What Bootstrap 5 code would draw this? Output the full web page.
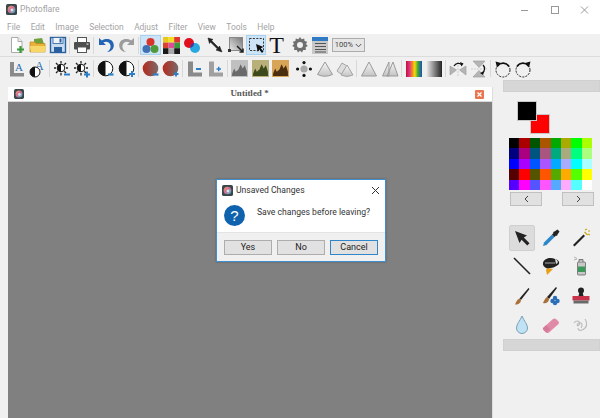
<!DOCTYPE html>
<html lang="en">
<head>
  <meta charset="UTF-8" />
  <title>Photoflare</title>
  <link href="https://cdn.jsdelivr.net/npm/bootstrap@5.3.0/dist/css/bootstrap.min.css" rel="stylesheet">
  <style>
    html, body { height: 100%; }
    body {
      background: #f0f0f0;
      font-family: Roboto, "Open Sans", sans-serif;
      font-size: 9px;
      overflow: hidden;
    }
    .app { width: 600px; height: 418px; position: relative; }
    .title-row { height: 20px; background: #fff; color: #a3a3a3; font-size: 8.6px; padding: 0 0 1px 6px; }
    .title-row .app-name { margin-left: 3px; }
    .win-btns svg { display: block; }
    .menu-row { height: 14px; background: #fff; color: #a3a3a3; padding-left: 7px; gap: 10.5px; font-size: 8.4px; }
    .tool-row { height: 23px; background: #f0f0f0; padding-left: 6.75px; border-bottom: 1px solid #dcdcdc; }
    .tool-row + .tool-row { border-bottom: 0; }
    .tb-btn { width: 20.5px; height: 20px; display: flex; align-items: center; justify-content: center; border: 1px solid transparent; flex: none; }
    .tb-btn.on { background: #cde4f7; border-color: #a8d2f0; }
    .tb-sep { width: 3.5px; height: 17px; flex: none; }
    .tb-sep::after { content: ""; display: block; width: 1px; height: 17px; margin-left: 1px; background: #d8d8d8; }
    .tb-nosep { width: 3px; }
    .tb-nosep::after { display: none; }
    .t-glyph { font-family: "Liberation Serif", serif; font-size: 24px; line-height: 20px; color: #111; }
    .combo { width: 33px; height: 14px; border: 1px solid #acacac; background: #e6e6e6; font-size: 7.5px; color: #444; padding: 0 2px; margin-left: 1px; }
    .work { height: 338px; }
    .canvas-side { width: 503px; padding: 7px 0 0 8px; }
    .sub-win { width: 485px; height: 331px; background: #808080; border-right: 1px solid #ddd; }
    .sub-title { height: 15px; background: #fff; border-bottom: 1px solid #d8d8d8; padding: 0 6px; font-family: "Liberation Serif", serif; font-size: 9px; font-weight: 700; color: #555; }
    .sub-title .name { flex: 1; text-align: center; }
    .close-x { width: 9px; height: 9px; background: #e8774f; border-radius: 1px; margin-right: 2px; color: #fff; }
    .side { width: 97px; }
    .grey-bar { height: 12px; background: #d6d6d6; border: 1px solid #d0d0d0; }
    .swatches { height: 46px; padding: 9px 0 0 14px; }
    .swatch { width: 20px; height: 20px; border: 1px solid #c8c8c8; }
    .swatch-fg { background: #000; position: relative; z-index: 1; }
    .swatch-bg { background: #f00; margin: -7px 0 0 13px; }
    .palette { display: grid; grid-template-columns: repeat(8, 10.4px); grid-auto-rows: 10.4px; margin-left: 6px; width: 84px; }
    .nav-btns { padding: 2px 6px 0 7px; }
    .pal-btn { width: 32px; height: 14px; background: #e1e1e1; border: 1px solid #c0c0c0; display: flex; align-items: center; justify-content: center; }
    .tools-grid { display: grid; grid-template-columns: 26px 31px 30px; grid-template-rows: 26px 30px 30px 28px; margin: 19px 0 0 6px; justify-items: center; align-items: center; }
    .tool-on { width: 26px; height: 26px; background: #dcdcdc; border: 1px solid #cfcfcf; border-radius: 2px; }
    .dlg { position: absolute; left: 216px; top: 179px; width: 170px; height: 83px; background: #fff; border: 1px solid #3f8fcf; box-shadow: 0 0 2px rgba(0,0,0,.3); color: #333; }
    .dlg-head { height: 20px; padding: 0 5px; font-size: 8.6px; }
    .dlg-head span { margin-left: 3px; flex: 1; }
    .dlg-body { height: 32px; padding: 0 0 2px 7px; }
    .dlg-body span { margin: -6px 0 0 12px; font-size: 8.6px; }
    .dlg-foot { height: 29px; background: #f0f0f0; padding: 0 7px; gap: 5px; border-top: 1px solid #e4e4e4; }
    .dlg-btn { width: 48px; height: 15px; background: #e1e1e1; border: 1px solid #adadad; font-size: 9px; line-height: 13px; text-align: center; color: #222; }
    .dlg-btn.def { border: 1.5px solid #2f86c8; line-height: 12px; }
    .svg-defs { width: 0; height: 0; display: block; }
    .scene-a { color: #6a6a6a; }
    .scene-b { color: #3d4a1e; }
    .scene-c { color: #4a2e10; }
  </style>
</head>
<body>

<svg class="svg-defs">
  <defs>
    <linearGradient id="gTri" x1="0" y1="0" x2="0" y2="1"><stop offset="0" stop-color="#f6f6f6"/><stop offset="1" stop-color="#c4c4c4"/></linearGradient>
    <linearGradient id="gRed" x1="0" y1="0" x2="1" y2="0"><stop offset="0" stop-color="#b52a1c"/><stop offset="1" stop-color="#7a6a6a"/></linearGradient>
    <linearGradient id="gGray" x1="0" y1="0" x2="1" y2="0"><stop offset="0" stop-color="#f2f2f2"/><stop offset="1" stop-color="#222"/></linearGradient>
    <linearGradient id="gCrop" x1="0" y1="1" x2="1" y2="0"><stop offset="0" stop-color="#e8e8e8"/><stop offset="1" stop-color="#777"/></linearGradient>
    <linearGradient id="gRain" x1="0" y1="0" x2="1" y2="0">
      <stop offset="0" stop-color="#c8102e"/><stop offset=".2" stop-color="#d92f8c"/><stop offset=".4" stop-color="#f28c1e"/><stop offset=".55" stop-color="#f5d90a"/><stop offset=".75" stop-color="#3aa63a"/><stop offset="1" stop-color="#1e4fb8"/>
    </linearGradient>
    <linearGradient id="gLogo" x1="0" y1="0" x2="1" y2="1"><stop offset="0" stop-color="#e8a860"/><stop offset=".45" stop-color="#d86a98"/><stop offset="1" stop-color="#38c0c8"/></linearGradient>
    <symbol id="logo" viewBox="0 0 12 12"><rect width="12" height="12" rx="2" fill="#37474a"/><circle cx="6" cy="6" r="4.2" fill="url(#gLogo)"/><circle cx="6.5" cy="6.5" r="1.6" fill="#c8ecec"/></symbol>
    <symbol id="tri" viewBox="0 0 18 18"><path d="M9 2 L16.5 14.5 Q9 18 1.5 14.5Z" fill="url(#gTri)" stroke="#9a9a9a"/></symbol>
    <symbol id="triTwo" viewBox="0 0 18 18"><path d="M6 3 L1 11 Q3 13 6 14 L11 6Z" fill="#ddd" stroke="#a5a5a5"/><path d="M11 5 L17 15 Q11 18 5 15Z" fill="url(#gTri)" stroke="#a5a5a5"/></symbol>
    <symbol id="scene" viewBox="0 0 16 16"><path d="M1 13 L3 8 L4.5 11 L7 9 L9 4 L11 8 L13 5 L15 11 V15 H1Z" fill="currentColor"/></symbol>
  </defs>
</svg>

<div class="app">
  <div class="title-row d-flex align-items-center">
    <svg width="11" height="11"><use href="#logo"/></svg>
    <span class="app-name flex-grow-1">Photoflare</span>
    <div class="win-btns d-flex">
      <svg width="31" height="10" viewBox="0 0 31 10"><path d="M11 5.5 H18" stroke="#999"/></svg>
      <svg width="29" height="10" viewBox="0 0 29 10"><rect x="10.5" y="1.5" width="7" height="7" fill="none" stroke="#999"/></svg>
      <svg width="30" height="10" viewBox="0 0 30 10"><path d="M11 1.5 L18 8.5 M18 1.5 L11 8.5" stroke="#999"/></svg>
    </div>
  </div>
  <div class="menu-row d-flex align-items-center">
    <span>File</span><span>Edit</span><span>Image</span><span>Selection</span><span>Adjust</span><span>Filter</span><span>View</span><span>Tools</span><span>Help</span>
  </div>

  <div class="tool-row d-flex align-items-center">
    <div class="tb-btn"><svg width="18" height="18"><path d="M3.5 1.5 H10 L14 5.5 V16.5 H3.5Z" fill="#fff" stroke="#aaa"/><path d="M10 1.5 V5.5 H14" fill="#eee" stroke="#aaa"/><path d="M12.5 10 V17 M9 13.5 H16" stroke="#3a9a3a" stroke-width="2.2"/></svg></div>
    <div class="tb-btn"><svg width="18" height="18"><path d="M5 3 L13 2 L15 8 H5Z" fill="#6fa03c"/><path d="M1 6 H6 L7 7.5 H16 V16 H1Z" fill="#e9b23a" stroke="#b98a1c" stroke-width=".7"/><path d="M1 10 H17 L16 16 H2Z" fill="#f7d66a"/></svg></div>
    <div class="tb-btn"><svg width="18" height="18"><rect x="1.5" y="1.5" width="15" height="15" fill="#c9dcef" stroke="#2a5f9e" stroke-width="1.4"/><rect x="4" y="1.5" width="10" height="6" fill="#eef4fa" stroke="#2a5f9e" stroke-width=".8"/><rect x="5" y="11" width="8" height="5.5" fill="#2a5f9e"/><rect x="10.5" y="2.5" width="2" height="4" fill="#2a5f9e"/></svg></div>
    <div class="tb-sep"></div>
    <div class="tb-btn"><svg width="18" height="18"><rect x="4.5" y="1.5" width="9" height="5" fill="#fff" stroke="#555"/><rect x="1" y="6" width="16" height="7.5" rx="1" fill="#4e4e4e"/><rect x="4.5" y="11" width="9" height="5.5" fill="#fff" stroke="#555"/><rect x="13.5" y="7.5" width="2" height="1.2" fill="#ddd"/></svg></div>
    <div class="tb-sep"></div>
    <div class="tb-btn"><svg width="18" height="18"><path d="M2 2 V9 H9 L6.3 6.6 C9 4.8 13 6 13.5 9.5 C14 12.5 12.5 14.5 10 16 C14 16 17 13 16.8 9 C16.5 3.8 10.5 1.2 4.8 4.6Z" fill="#2464b4"/></svg></div>
    <div class="tb-btn"><svg width="18" height="18"><path d="M16 2 V9 H9 L11.7 6.6 C9 4.8 5 6 4.5 9.5 C4 12.5 5.5 14.5 8 16 C4 16 1 13 1.2 9 C1.5 3.8 7.5 1.2 13.2 4.6Z" fill="#9c9c9c"/></svg></div>
    <div class="tb-sep"></div>
    <div class="tb-btn on"><svg width="17" height="17"><circle cx="8.5" cy="5" r="4" fill="#d9342b"/><circle cx="4.5" cy="12" r="4" fill="#3f6fb5"/><circle cx="12.5" cy="12" r="4" fill="#4f9a3a"/></svg></div>
    <div class="tb-btn"><svg width="17" height="17"><rect width="5.6" height="5.6" fill="#e8c81e"/><rect x="5.6" width="5.6" height="5.6" fill="#f2e01e"/><rect x="11.2" width="5.8" height="5.6" fill="#e0342c"/><rect y="5.6" width="5.6" height="5.6" fill="#d9432b"/><rect x="5.6" y="5.6" width="5.6" height="5.6" fill="#e04a9a"/><rect x="11.2" y="5.6" width="5.8" height="5.6" fill="#3a9a3a"/><rect y="11.2" width="5.6" height="5.8" fill="#1a1a1a"/><rect x="5.6" y="11.2" width="5.6" height="5.8" fill="#a8a8a8"/><rect x="11.2" y="11.2" width="5.8" height="5.8" fill="#1a1a1a"/></svg></div>
    <div class="tb-btn"><svg width="18" height="17"><circle cx="6" cy="6" r="5" fill="#e0101c"/><circle cx="12" cy="11" r="5" fill="#29a8e0"/><path d="M8.5 7 A5 5 0 0 1 11 6.1 A5 5 0 0 1 7.2 10.9 A5 5 0 0 1 8.5 7Z" fill="#5a2a90"/></svg></div>
    <div class="tb-sep tb-nosep"></div>
    <div class="tb-btn"><svg width="18" height="18"><path d="M2 2 L7 3.5 L5.5 4.5 L12.5 11.5 L13.5 10 L16 16 L10 14 L11.5 13 L4.5 6 L3.5 7.5Z" fill="#222" stroke="#222" stroke-width=".6"/></svg></div>
    <div class="tb-btn"><svg width="18" height="18"><rect x="2.5" y="1.5" width="13" height="13" fill="url(#gCrop)" stroke="#888"/><path d="M10 10 L16 16 M16 12.5 V16 H12.5" stroke="#222" stroke-width="1.5" fill="none"/><rect x="1" y="13" width="3" height="3" fill="#333"/></svg></div>
    <div class="tb-btn on"><svg width="17" height="17"><rect x="1.5" y="1.5" width="14" height="12" fill="none" stroke="#333" stroke-dasharray="2 1.4"/><path d="M8 7 L15.5 10 L12.8 11.2 L15.5 14.5 L14 16 L11.2 12.5 L9.8 15Z" fill="#111"/></svg></div>
    <div class="tb-btn"><span class="t-glyph">T</span></div>
    <div class="tb-sep tb-nosep"></div>
    <div class="tb-btn"><svg width="18" height="18"><path d="M9 1 L10.6 3.2 L13.2 2.4 L13.6 5.1 L16.2 5.7 L15 8 L16.8 10 L14.6 11.3 L14.9 14 L12.2 14 L11 16.4 L9 14.8 L6.9 16.4 L5.8 14 L3 14 L3.4 11.3 L1.2 10 L3 8 L1.8 5.7 L4.4 5.1 L4.8 2.4 L7.4 3.2Z" fill="#6f6f6f"/><circle cx="9" cy="9" r="3" fill="#f0f0f0"/></svg></div>
    <div class="tb-btn"><svg width="17" height="17"><rect width="16" height="4" fill="#2f7cc4"/><rect y="4" width="16" height="13" fill="#c8c8c8"/><path d="M3 6.5 H14 M3 9.5 H14 M3 12.5 H14 M3 15 H14" stroke="#555" stroke-width="1.2"/></svg></div>
    <div class="combo d-flex align-items-center justify-content-between"><span>100%</span><svg width="7" height="5"><path d="M.8 1 L3.5 3.8 L6.2 1" fill="none" stroke="#555"/></svg></div>
  </div>

  <div class="tool-row d-flex align-items-center">
    <div class="tb-btn"><svg width="18" height="18"><path d="M2 2 H6 V13 H16 V16.5 H2Z" fill="#8a8a8a"/><text x="7" y="11" font-family="Liberation Serif" font-size="11" fill="#2a6fb0">A</text></svg></div>
    <div class="tb-btn"><svg width="18" height="18"><text x="6" y="10" font-family="Liberation Serif" font-size="12" fill="#2a6fb0">A</text><circle cx="6" cy="12" r="5" fill="#fff" stroke="#111"/><path d="M6 7 A5 5 0 0 0 6 17Z" fill="#111"/></svg></div>
    <div class="tb-sep"></div>
    <div class="tb-btn"><svg width="18" height="18"><path d="M8 1 V3.5 M8 13 V15.5 M1 8 H3 M13 8 H15 M3 3 L4.7 4.7 M13 3 L11.3 4.7 M3 13 L4.7 11.3 M13 13 L11.3 11.3" stroke="#222" stroke-width="1.3"/><circle cx="8" cy="8" r="3.8" fill="#fff" stroke="#111"/><path d="M8 4.2 A3.8 3.8 0 0 0 8 11.8Z" fill="#111"/><path d="M11 14.5 H17" stroke="#2a7fc8" stroke-width="2"/></svg></div>
    <div class="tb-btn"><svg width="18" height="18"><path d="M8 1 V3.5 M8 13 V15.5 M1 8 H3 M13 8 H15 M3 3 L4.7 4.7 M13 3 L11.3 4.7 M3 13 L4.7 11.3 M13 13 L11.3 11.3" stroke="#222" stroke-width="1.3"/><circle cx="8" cy="8" r="3.8" fill="#fff" stroke="#111"/><path d="M8 4.2 A3.8 3.8 0 0 0 8 11.8Z" fill="#111"/><path d="M11 14.5 H17 M14 11.5 V17.5" stroke="#2a7fc8" stroke-width="2"/></svg></div>
    <div class="tb-sep"></div>
    <div class="tb-btn"><svg width="18" height="18"><circle cx="8.5" cy="8.5" r="7.3" fill="#fff" stroke="#111"/><path d="M8.5 1.2 A7.3 7.3 0 0 0 8.5 15.8Z" fill="#111"/><path d="M11 14.5 H16.5" stroke="#2a7fc8" stroke-width="2.2"/></svg></div>
    <div class="tb-btn"><svg width="18" height="18"><circle cx="8.5" cy="8.5" r="7.3" fill="#fff" stroke="#111"/><path d="M8.5 1.2 A7.3 7.3 0 0 0 8.5 15.8Z" fill="#111"/><path d="M11 14 H17 M14 11 V17" stroke="#2a7fc8" stroke-width="2"/></svg></div>
    <div class="tb-sep"></div>
    <div class="tb-btn"><svg width="18" height="18"><circle cx="8.5" cy="8.5" r="7.8" fill="url(#gRed)"/><path d="M11 14.5 H16.5" stroke="#2a7fc8" stroke-width="2.2"/></svg></div>
    <div class="tb-btn"><svg width="18" height="18"><circle cx="8.5" cy="8.5" r="7.8" fill="url(#gRed)"/><path d="M12 14 H16.5 M14 11.5 V16.5" stroke="#2a7fc8" stroke-width="1.8"/></svg></div>
    <div class="tb-sep"></div>
    <div class="tb-btn"><svg width="18" height="18"><path d="M2 1.5 H7 V12.5 H16 V16.5 H2Z" fill="#8a8a8a"/><path d="M10 9 H15" stroke="#2a7fc8" stroke-width="2"/></svg></div>
    <div class="tb-btn"><svg width="18" height="18"><path d="M2 1.5 H7 V12.5 H16 V16.5 H2Z" fill="#a0a0a0"/><path d="M9.5 9 H14 M11.7 6.8 V11.2" stroke="#2a7fc8" stroke-width="1.4"/></svg></div>
    <div class="tb-sep"></div>
    <div class="tb-btn"><svg width="17" height="17" class="scene-a"><rect width="17" height="17" fill="#c0c0c0"/><use href="#scene" width="17" height="17"/></svg></div>
    <div class="tb-btn"><svg width="17" height="17" class="scene-b"><rect width="17" height="17" fill="#b8b078"/><use href="#scene" width="17" height="17"/></svg></div>
    <div class="tb-btn"><svg width="17" height="17" class="scene-c"><rect width="17" height="17" fill="#d8a458"/><use href="#scene" width="17" height="17"/></svg></div>
    <div class="tb-sep tb-nosep"></div>
    <div class="tb-btn"><svg width="18" height="18"><circle cx="9" cy="9" r="3.6" fill="#a8a8a8"/><circle cx="9" cy="2.6" r="1.6" fill="#111"/><circle cx="9" cy="15.4" r="1.6" fill="#111"/><circle cx="2.6" cy="9" r="1.6" fill="#111"/><circle cx="15.4" cy="9" r="1.6" fill="#111"/></svg></div>
    <div class="tb-btn"><svg width="18" height="18"><use href="#tri" width="18" height="18"/></svg></div>
    <div class="tb-btn"><svg width="18" height="18"><use href="#triTwo" width="18" height="18"/></svg></div>
    <div class="tb-sep"></div>
    <div class="tb-btn"><svg width="18" height="18"><path d="M9 2 L16.5 16 H1.5Z" fill="url(#gTri)" stroke="#9a9a9a"/></svg></div>
    <div class="tb-btn"><svg width="18" height="18"><path d="M8 2 L1.5 16 H8Z M12 2 L6 16 H17Z" fill="url(#gTri)" stroke="#9a9a9a"/></svg></div>
    <div class="tb-sep"></div>
    <div class="tb-btn"><svg width="16" height="16"><rect width="16" height="16" fill="url(#gRain)"/></svg></div>
    <div class="tb-btn"><svg width="16" height="16"><rect width="16" height="16" fill="url(#gGray)"/></svg></div>
    <div class="tb-sep"></div>
    <div class="tb-btn"><svg width="18" height="18"><path d="M1 6 L7.5 10 L1 15Z M17 6 L10.5 10 L17 15Z" fill="#b5b5b5" stroke="#999" stroke-width=".6"/><path d="M9 2 V17" stroke="#ccc" stroke-dasharray="2 1"/><path d="M5 6 A5 5 0 0 1 13 5" fill="none" stroke="#111" stroke-width="1.3"/><path d="M11 2 L14.5 3.5 L12.5 6.5Z" fill="#111"/></svg></div>
    <div class="tb-btn"><svg width="18" height="18"><path d="M3 1 L9 7.5 L15 1Z M3 17 L9 10.5 L15 17Z" fill="#b5b5b5" stroke="#999" stroke-width=".6"/><path d="M1 9 H17" stroke="#ccc" stroke-dasharray="2 1"/><path d="M13 5 A5 5 0 0 1 12 13" fill="none" stroke="#111" stroke-width="1.3"/><path d="M14.5 11 L13 15 L10 13Z" fill="#111"/></svg></div>
    <div class="tb-sep"></div>
    <div class="tb-btn"><svg width="18" height="18"><circle cx="9" cy="10" r="7" fill="none" stroke="#222" stroke-dasharray="2 1.2" stroke-width="1"/><path d="M3.5 6 A7 7 0 0 1 15 6.5" fill="none" stroke="#111" stroke-width="1.5"/><path d="M1.5 1.5 L7 3 L3 7.5Z" fill="#111"/></svg></div>
    <div class="tb-btn"><svg width="18" height="18"><circle cx="9" cy="10" r="7" fill="none" stroke="#222" stroke-dasharray="2 1.2" stroke-width="1"/><path d="M14.5 6 A7 7 0 0 0 3 6.5" fill="none" stroke="#111" stroke-width="1.5"/><path d="M16.5 1.5 L11 3 L15 7.5Z" fill="#111"/></svg></div>
  </div>

  <div class="work d-flex">
    <div class="canvas-side">
      <div class="sub-win">
        <div class="sub-title d-flex align-items-center">
          <svg width="10" height="10"><use href="#logo"/></svg>
          <span class="name">Untitled *</span>
          <div class="close-x d-flex align-items-center justify-content-center"><svg width="5" height="5"><path d="M.5 .5 L4.5 4.5 M4.5 .5 L.5 4.5" stroke="#fff" stroke-width="1.2"/></svg></div>
        </div>
      </div>
    </div>
    <div class="side">
      <div class="grey-bar"></div>
      <div class="swatches">
        <div class="swatch swatch-fg"></div>
        <div class="swatch swatch-bg"></div>
      </div>
      <div class="palette" id="palette"></div>
      <div class="nav-btns d-flex justify-content-between">
        <div class="pal-btn"><svg width="5" height="8"><path d="M4 1 L1 4 L4 7" fill="none" stroke="#444"/></svg></div>
        <div class="pal-btn"><svg width="5" height="8"><path d="M1 1 L4 4 L1 7" fill="none" stroke="#444"/></svg></div>
      </div>
      <div class="tools-grid">
        <div class="tool-on d-flex align-items-center justify-content-center"><svg width="18" height="18"><path d="M2 2 L14 6.5 L10.8 8.6 L16.5 14.3 L14.3 16.5 L8.6 10.8 L6.5 14Z" fill="#222"/></svg></div>
        <svg width="20" height="20"><path d="M2 18 L3 14.5 L11 6.5 L13.5 9 L5.5 17Z" fill="#2d86c8"/><path d="M11 6.5 L13.5 9 L15 7.5 L16 8 L16.5 6.5 L18.5 3.5 L16.5 1.5 L13.5 3.5 L12 4 L12.5 5Z" fill="#222"/></svg>
        <svg width="20" height="20"><path d="M2 17 L3.5 18.5 L14 8 L12.5 6.5Z" fill="#222"/><path d="M14 2 L16 1 M17 3 L19 3 M17 6 L19 7 M13.5 4 L16.5 7" stroke="#c8a818" stroke-width="1.2" fill="none"/></svg>
        <svg width="20" height="20"><path d="M2 2 L18 18" stroke="#222" stroke-width="1.6"/></svg>
        <svg width="20" height="20"><path d="M6 12 L12 13 L6 19 L5 14Z" fill="#e8a018"/><path d="M2 7 C3 2 10 1 14 3 C18 4 19.5 7 17 9 C14 11.5 8 13 5 12 C3 11 1.5 9 2 7Z" fill="#222"/><path d="M4 7 H14" stroke="#ccc" stroke-width=".8"/><path d="M14 3 C17 4 18 7 15 8" fill="#ddd"/></svg>
        <svg width="20" height="20"><rect x="6.5" y="6" width="8" height="13" rx="1" fill="#c8c8c8" stroke="#555" stroke-width=".7"/><rect x="7" y="10.5" width="7" height="5.5" fill="#3a9a5a"/><path d="M8 6 V3.5 H12 V6" fill="#bbb" stroke="#555" stroke-width=".7"/><path d="M3 1 L6 2.5 M3 4 L6 3" stroke="#999" stroke-width=".7"/></svg>
        <svg width="20" height="20"><path d="M7.5 12.5 L16.5 2 L17.5 3 L9 14Z" fill="#222"/><path d="M3 18.5 C4 16 5 13.5 7.5 12.5 L9 14 C9 17 6 19 3 18.5Z" fill="#a87038"/></svg>
        <svg width="20" height="20"><path d="M6 11 L15 1 L16 2 L8 13Z" fill="#222"/><path d="M2 17 C3 15 4 12 6 11 L8 13 C8 16 5 18 2 17Z" fill="#a87038"/><circle cx="14" cy="12" r="2.2" fill="#2a6fb8"/><circle cx="11.5" cy="15" r="2.2" fill="#2a6fb8"/><circle cx="16.5" cy="15" r="2.2" fill="#2a6fb8"/><circle cx="14" cy="17" r="2.2" fill="#2a6fb8"/></svg>
        <svg width="20" height="20"><circle cx="10" cy="4.5" r="3" fill="#222"/><path d="M8.5 6 H11.5 L12.5 10 H7.5Z" fill="#222"/><rect x="1.5" y="10" width="17" height="4.5" fill="#c8324a"/><rect x="2.5" y="14.5" width="15" height="3" fill="#6a6a6a"/></svg>
        <svg width="20" height="20"><path d="M10 1 C12 6 15.5 9 15.5 13 A5.5 5.5 0 0 1 4.5 13 C4.5 9 8 6 10 1Z" fill="#bfe3f5" stroke="#7d9fb5"/></svg>
        <svg width="20" height="20"><path d="M2 13 L12 4 Q13.5 3 15 4 L17.5 6.5 Q18.5 8 17.5 9 L8 17.5 Q6.5 18.5 5 17.5 L2.5 15 Q1.5 14 2 13Z" fill="#e08aa6"/><path d="M5 17.5 L2.5 15 Q1.5 14 2 13 L5 10 L9 14 Z" fill="#c9688a" opacity=".5"/></svg>
        <svg width="20" height="20"><path d="M3 8 C6 4 10 7 8 10 C6 12 5 9 8 8 C11 7 12 10 10 13 M14 4 C17 8 16 13 11 15 C9 16 7 15 7 13" fill="none" stroke="#bdbdbd" stroke-width="1.2"/></svg>
      </div>
      <div class="grey-bar"></div>
    </div>
  </div>

  <div class="dlg">
    <div class="dlg-head d-flex align-items-center">
      <svg width="11" height="11"><use href="#logo"/></svg>
      <span>Unsaved Changes</span>
      <svg width="9" height="9"><path d="M1 1 L8 8 M8 1 L1 8" stroke="#333" stroke-width="1"/></svg>
    </div>
    <div class="dlg-body d-flex align-items-center">
      <svg width="21" height="21"><circle cx="10.5" cy="10.5" r="10.5" fill="#0f62ad"/><text x="10.5" y="16" text-anchor="middle" font-family="Liberation Sans" font-size="15" fill="#fff">?</text></svg>
      <span>Save changes before leaving?</span>
    </div>
    <div class="dlg-foot d-flex align-items-center">
      <div class="dlg-btn">Yes</div>
      <div class="dlg-btn">No</div>
      <div class="dlg-btn def">Cancel</div>
    </div>
  </div>
</div>

<script>
const colours = [
  "000000","aa0000","005500","aa5500","00aa00","aaaa00","00ff00","aaff00",
  "00007f","aa007f","00557f","aa557f","00aa7f","aaaa7f","00ff7f","aaff7f",
  "0000ff","aa00ff","0055ff","aa55ff","00aaff","aaaaff","00ffff","aaffff",
  "550000","ff0000","555500","ff5500","55aa00","ffaa00","55ff00","ffff00",
  "5500ff","ff00ff","5555ff","ff55ff","55aaff","ffaaff","55ffff","ffffff"
];
const palette = document.getElementById("palette");
colours.forEach(c => {
  const cell = document.createElement("div");
  cell.style.background = "#" + c;
  palette.appendChild(cell);
});
</script>

</body>
</html>
